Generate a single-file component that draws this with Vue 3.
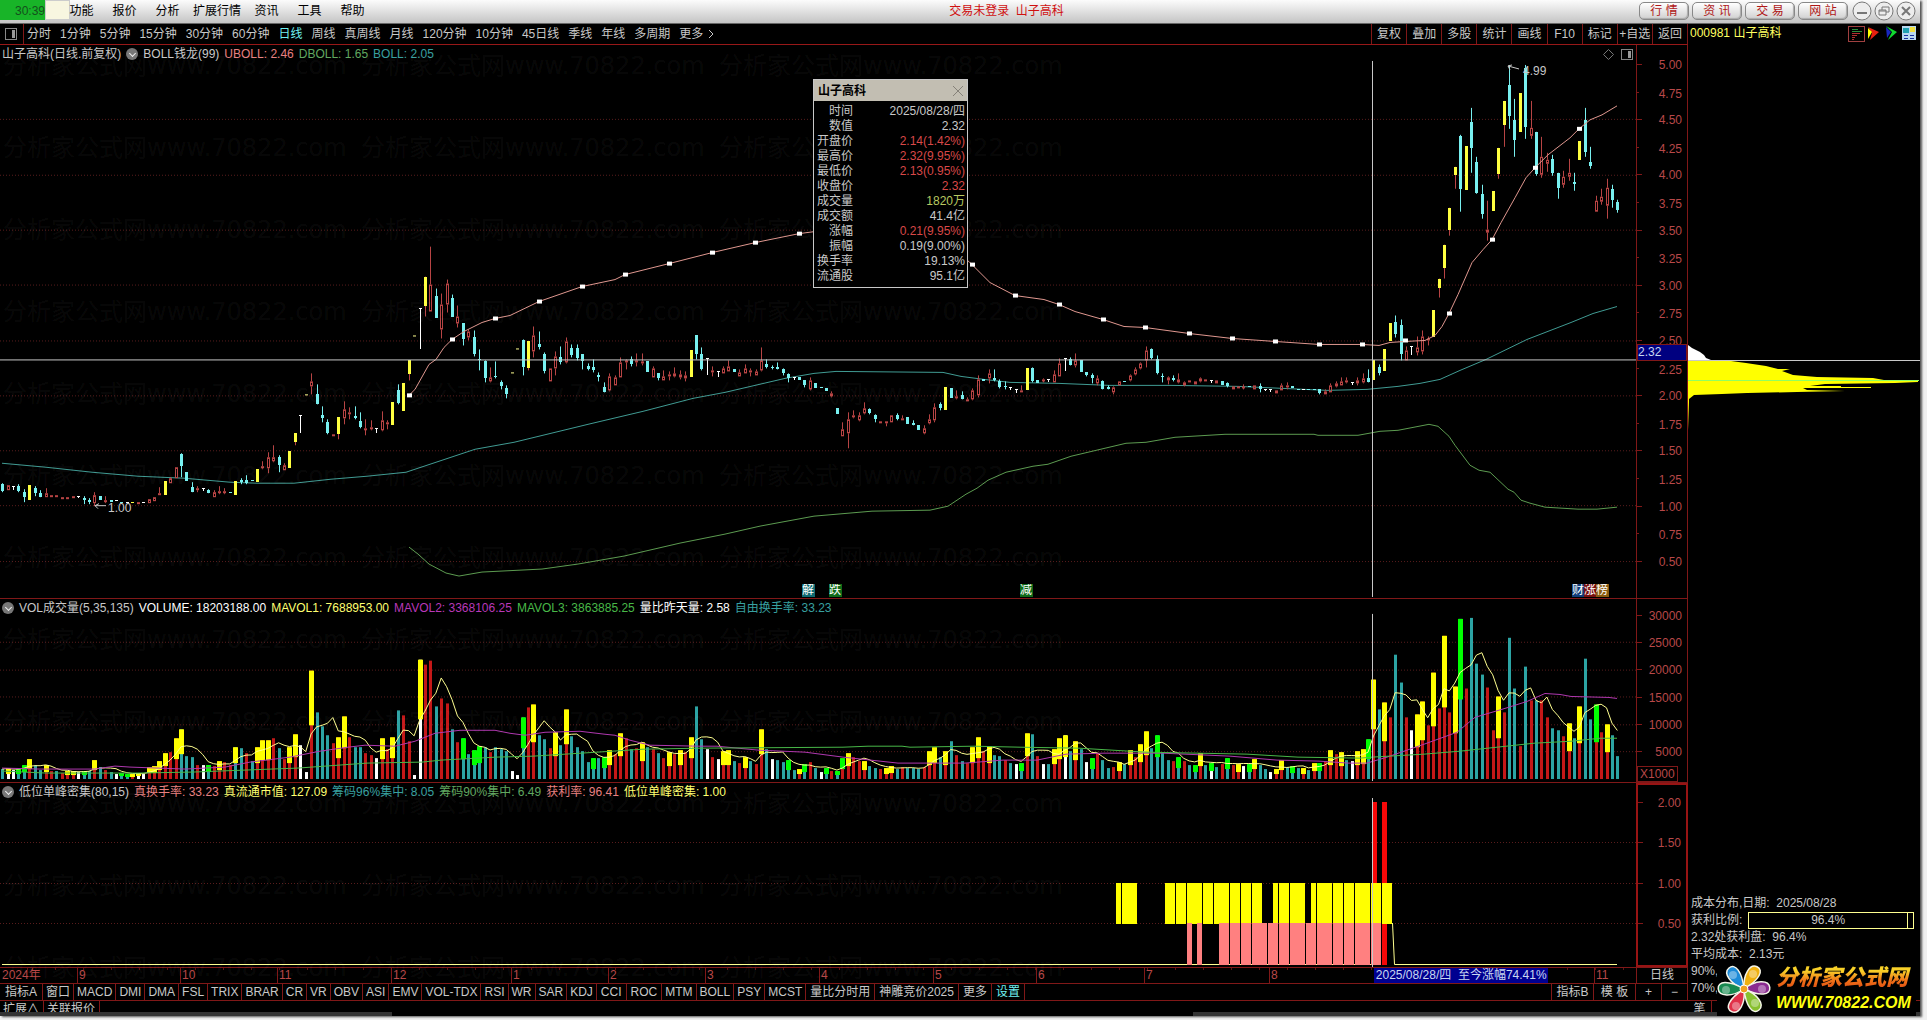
<script setup>
const menus = ['功能', '报价', '分析', '扩展行情', '资讯', '工具', '帮助']
const quick = ['行 情', '资 讯', '交 易', '网 站']
const periods = ['分时', '1分钟', '5分钟', '15分钟', '30分钟', '60分钟', '日线', '周线', '真周线', '月线', '120分钟', '10分钟', '45日线', '季线', '年线', '多周期', '更多']
const tools = ['复权', '叠加', '多股', '统计', '画线', 'F10', '标记', '+自选', '返回']
const tabs = ['指标A', '窗口', 'MACD', 'DMI', 'DMA', 'FSL', 'TRIX', 'BRAR', 'CR', 'VR', 'OBV', 'ASI', 'EMV', 'VOL-TDX', 'RSI', 'WR', 'SAR', 'KDJ', 'CCI', 'ROC', 'MTM', 'BOLL', 'PSY', 'MCST', '量比分时用', '神雕竞价2025', '更多', '设置']
const roomy = ['指标A', 'CCI', 'ROC', '量比分时用', '神雕竞价2025', '更多', '设置']
const details = [
  ['时间', '2025/08/28/四', ''], ['数值', '2.32', ''], ['开盘价', '2.14(1.42%)', 'rise'], ['最高价', '2.32(9.95%)', 'rise'],
  ['最低价', '2.13(0.95%)', 'rise'], ['收盘价', '2.32', 'rise'], ['成交量', '1820万', 'vol'], ['成交额', '41.4亿', ''],
  ['涨幅', '0.21(9.95%)', 'rise'], ['振幅', '0.19(9.00%)', ''], ['换手率', '19.13%', ''], ['流通股', '95.1亿', ''],
]
const months = [['2024年', 1], ['9', 77], ['10', 180], ['11', 277], ['12', 391], ['1', 511], ['2', 608], ['3', 705], ['4', 819], ['5', 933], ['6', 1036], ['7', 1144], ['8', 1269], ['11', 1594]]
const pins = [['解', 802, '#0e6a72'], ['跌', 829, '#106a18'], ['减', 1020, '#106a18'], ['财', 1572, '#103c78'], ['涨', 1584, '#781010'], ['榜', 1596, '#8a5a10']]

const W = 1636
const barX = i => 2.2 + 5.42 * i
const pct = (v, total) => (v / total) * 100 + '%'

// one token per trading day: kind, body top, body bottom, wick top, wick bottom
const days = (
  'c485,492,484,493 r486,491 w487,491 c487,492,485,493 c493,498,490,503 y486,501 c489,494,487,497 c494,498,491,498 r494,498,489,498 r496,498 ' +
  'r496,498 r498,499 r498,499 r497,499 w497,499 c499,501,497,505 c501,503,499,505 r496,504,493,507 c497,501 r501,503,497,504 ' +
  'c501,503 w501,502 c503,504 w503,504 y503,504 r503,504 w503,504 r500,504 r498,502 r494,495,488,495 ' +
  'y482,496 r479,484,478,484 r468,479 c455,467,454,478 c473,482 c488,493,483,493 r489,491,487,493 w489,492 c491,494,490,494 r493,498,491,498 ' +
  'r492,494,487,495 r492,494,489,495 c493,494 y482,496 c481,483,479,485 c481,484,476,485 c481,482 y470,483 r467,469,462,470 r458,469,453,474 ' +
  'r458,462,446,463 c458,466,456,473 r466,471,464,471 y452,469 y434,443,434,446 w416,434 t395,396 r382,387,374,395 c395,405,385,405 c416,419,407,423 ' +
  'c423,434,420,435 r435,437 y418,435,418,440 r410,419,402,425 r413,415,408,420 c417,419,407,420 c422,428,413,429 r429,430,420,436 r428,430,421,431 w429,434 ' +
  'r421,431,412,432 r423,425,421,430 y403,426 c391,404,385,405 y384,412 y361,375,361,381 t336,337 w308,350 y277,306,277,317 r285,312,247,312 ' +
  'c296,318,289,318 r305,330,294,339 r284,305,280,313 c298,317,295,317 r317,324,306,328 c324,340,324,346 r332,338,330,341 c338,355,331,357 c360,361,350,371 c362,379,361,383 ' +
  'r378,382,368,383 c377,378,362,379 c383,387,381,390 c389,395,386,399 t373,374 t349,350 c341,368,340,376 y342,369,342,371 r336,352,327,358 c345,348,332,350 ' +
  'c355,372,353,374 r369,382 r357,369,352,376 c358,363,347,365 r342,363,338,364 c349,356,345,358 c349,359,345,361 c355,362,355,370 c367,370,364,371 c368,371,360,373 ' +
  'c376,378,373,382 c388,393,383,393 r377,391,374,392 r378,386,376,386 r363,378,358,378 r361,363,360,370 c360,365,357,367 r361,363,354,367 r362,364,354,366 c362,373 ' +
  'r369,378,367,378 c374,379,374,381 r377,381,371,381 r375,377,372,381 r374,377,368,378 r375,378,371,380 r376,379,372,382 y351,378 c336,355,336,360 c355,370,348,371 ' +
  'w359,376 r371,373,367,377 w372,378 r369,374,367,374 r367,372,361,372 c370,373 r373,377,370,377 r369,374,365,374 r371,373,369,377 r372,376,370,376 ' +
  'r361,371,348,372 c365,368,360,369 c368,369,366,370 c368,370,363,370 c370,374,369,376 c375,379,374,383 w378,381 c378,381 c381,386,381,388 r381,390,378,391 ' +
  'c384,389 c388,389 c389,392 r394,397,392,398 c409,415 r430,437,423,437 r420,434,413,449 r416,418,411,419 r416,421,413,422 r409,414,403,415 ' +
  'c410,414,409,415 c416,420,415,423 r422,424 r422,424,422,427 r416,423 c416,420,414,421 r419,421,416,421 c418,425 c424,426,421,426 c426,431 ' +
  'r429,434,426,435 r420,424,415,425 r408,421,404,423 c405,409,403,411 y388,411 c389,399 r397,399,391,400 c396,400,392,400 r400,402,398,402 r391,400,389,401 ' +
  'r380,396,376,398 c380,382 r374,379,370,384 c379,381,370,382 c382,388,380,389 c387,388,382,390 w388,391 w390,394 r391,393,386,393 y369,391 ' +
  'c369,382,368,383 c381,384 r380,381,379,383 w380,383 r375,383,371,383 r364,377,359,377 w359,372 c360,366,358,366 r361,366,354,368 c361,373 ' +
  'c373,376,373,377 c376,379,374,384 r379,384,376,386 c382,390,381,390 c388,390,386,390 r388,393,387,395 r382,386 c382,383 r376,381,375,382 r370,375,368,376 ' +
  'r364,369,363,370 r351,361,347,368 c350,359,349,360 c360,374,356,375 c377,378,374,383 r378,381,377,385 c379,381,376,382 r380,383,374,384 r383,386,382,387 r381,382 ' +
  'r382,385 r379,382,378,383 r380,381 w381,384 r381,384 c382,386 c384,387,383,388 r387,390 r387,388 r387,388,385,390 ' +
  'c387,388 r386,390 c387,390,384,393 w390,392 w390,393 r391,394 r386,391,384,391 r386,388,383,390 c387,389 c390,391 ' +
  'w390,391 c390,391 c390,391 c390,394,390,395 r392,395,390,395 r386,393,384,393 r384,387,382,388 r382,386,378,386 r381,383,378,384 w383,386 ' +
  'r381,384,378,386 r379,383,374,384 c379,383,370,383 y361,381 c368,374,365,376 y350,372 y324,342 c323,335,316,338 c326,355,320,361 r351,361,347,361 ' +
  'w347,356 r348,353,337,356 r337,352,331,355 r339,341,337,346 y310,338 y279,288,279,298 y245,268,245,279 y208,230,208,236 y167,175,167,189 c136,189,135,212 ' +
  'y146,190 c122,148,108,173 c162,193,157,194 c194,214,185,219 r230,233,201,241 y191,211 y148,174,148,179 y101,125,101,147 c85,116,65,129 c120,140,99,157 ' +
  'y93,132 c68,127,65,139 r128,136,101,139 c132,174,132,176 r157,175,137,178 r160,164,153,172 c159,173,155,176 c173,188,173,199 r177,185,171,188 r173,177,159,181 ' +
  'c182,184,173,191 y141,160 c120,152,108,157 c162,166,147,169 r201,212,196,212 r197,202,189,205 r188,206,179,219 c189,200,185,208 c202,210,200,213'
).split(' ').map((t, i) => {
  const [a, b, hi = a, lo = b] = t.slice(1).split(',').map(Number)
  return { k: t[0], a, b, hi, lo, x: Math.round(barX(i)) }
})

// bar colour, optional highlight of the upper half, height
const volumes = (
  'c10 wy11 w9 cg10 cg14 ry20 c14 c9 ry14 r8 c8 r6 ry8 ry8 w7 cg8 c8 ry19 c12 r9 c7 w5 cg6 cg5 ry5 wy6 w5 ry12 ry13 ry18 ry26 r27 ry41 cy50 c23 c22 r14 w14 cg14 r13 ' +
  'ry18 r17 r14 cy32 c31 r26 c18 ry32 ry39 ry39 r41 c31 r20 ry32 ry45 w34 w7 ry109 c67 c53 c44 r36 ry42 ry63 r42 c32 c32 r26 r24 w21 ry41 r30 ry42 c69 r64 r38 w4 wy120 r115 r119 ' +
  'c73 r81 r76 c50 r37 cg41 c25 cg29 cg33 c32 r27 c32 c30 c28 w8 w4 cg62 r72 ry75 c44 c40 r31 ry47 c34 ry70 c43 c32 c28 c17 cg21 c21 cg22 ry29 r25 ry46 r41 c30 r31 ry37 c32 ' +
  'r30 c26 r21 ry27 r25 ry29 r27 ry42 c73 c40 w30 r22 w20 ry28 ry29 c18 r16 ry22 c18 r15 ry50 c30 w20 c19 c17 cg19 c9 ry10 cg15 r17 c11 w7 cg11 r8 cg8 rg21 ry26 r22 r18 ry18 ' +
  'c13 c11 r10 ry11 ry13 c10 r12 c11 c11 c10 r12 ry28 ry32 c22 ry28 c38 r24 c18 r16 ry32 ry42 r28 ry33 c24 c23 r19 c16 w15 cg16 ry46 c45 r23 w15 c15 ry30 ry41 wy44 c28 ry38 c30 ' +
  'w17 cg21 r26 c19 c11 r12 ry17 c15 ry29 r22 ry35 ry48 c31 cg44 c27 c19 r18 cg22 r18 c14 cg14 ry26 c14 wg16 c12 r15 cg21 r14 ry15 w13 cg15 ry20 c14 c10 w7 ry10 ry19 c12 cg13 c11 ' +
  'ry11 c9 ry16 cg16 r18 ry29 r25 ry27 c19 w18 ry28 ry30 cg40 ry100 c70 ry77 r62 c125 c97 r62 w49 ry65 ry78 r54 ry107 r71 ry144 r67 ry93 cg161 r91 c162 c116 c105 r92 r49 ry83 r67 c142 c91 ' +
  'r33 c113 r79 c79 r79 r62 c51 c49 r43 ry56 c41 ry73 c121 c60 rg75 r47 ry55 c44 c23'
).split(' ').map((t, i) => {
  const m = t.match(/^([rcw])([yg]?)(\d+)$/)
  return { k: m[1], mark: m[2], h: +m[3], x: Math.round(barX(i)) }
})
const mavol1 = volumes.map((v, i) => {
  const part = volumes.slice(Math.max(0, i - 4), i + 1)
  return barX(i) + ',' + (780 - part.reduce((s, p) => s + p.h, 0) / part.length)
}).join(' ')
const mavol2 = '2,769 40,770 95,770 115,767 130,768 185,770 225,768 250,763 290,758 320,752 348,748 365,746 395,747 415,742 435,734 460,731 495,731 510,734 525,736 545,733 580,732 605,735 615,736 630,741 650,746 700,747 717,747 759,751 805,753 843,758 898,764 965,764 1003,761 1037,761 1066,755 1104,754 1163,754 1230,757 1277,761 1319,762 1348,764 1367,764 1387,758 1424,745 1457,733 1475,718 1505,709 1527,702 1545,694 1560,695 1571,697 1609,698 1617,699'
const mavol3 = '2,772 46,774 138,774 193,773 298,769 367,764 422,763 441,761 496,758 533,757 597,753 643,750 700,749 843,748 868,747 902,747 910,748 974,747 1020,748 1079,749 1146,753 1247,755 1298,758 1360,759 1372,758 1424,755 1460,752 1497,748 1534,744 1571,742 1600,739 1617,739'

const upper = '409,396 415,390 429,365 436,360 444,348 452,340 464,332 482,323 495,319 510,316 539,302 582,287 615,280 625,275 669,264 712,253 755,243 799,234 814,232 850,229 900,232 940,245 969,262 972,265 990,283 1015,296 1044,300 1059,305 1075,312 1103,320 1124,327 1145,328 1189,334 1232,339 1275,342 1319,345 1362,345 1379,346 1390,343 1405,342 1425,341 1435,336 1442,327 1449,314 1458,295 1472,263 1483,250 1492,240 1501,223 1515,198 1526,178 1535,168 1548,155 1570,138 1579,129 1590,120 1602,115 1617,106'
const middle = '2,464 46,468 92,473 138,477 184,479 230,483 257,484 294,484 331,480 367,477 406,473 445,460 475,450 514,443 588,425 643,412 693,399 725,393 785,379 814,374 836,372 943,373 961,377 984,380 1010,383 1059,384 1109,386 1171,386 1238,387 1305,390 1327,391 1367,390 1398,387 1420,384 1440,380 1460,371 1486,360 1527,340 1571,323 1593,314 1617,307'
const lower = '409,548 418,555 429,565 446,574 459,577 482,573 542,570 578,565 624,557 680,544 725,535 760,527 814,517 872,512 930,511 948,507 966,495 977,489 988,481 1006,473 1033,467 1048,465 1071,457 1126,444 1146,443 1175,438 1225,435 1314,435 1318,436 1358,436 1380,432 1398,431 1429,425 1438,427 1449,437 1455,446 1470,466 1479,471 1490,473 1508,490 1514,493 1521,501 1530,504 1545,508 1578,510 1597,510 1617,508'
const knots = '409,396 452,340 495,319 539,302 582,287 625,275 669,264 712,253 755,243 799,234 972,265 1015,296 1059,305 1103,320 1145,328 1189,334 1232,339 1275,342 1319,345 1362,345 1405,341 1449,314 1492,240 1535,168 1579,129'.split(' ').map(p => p.split(',').map(Number))

const priceAxis = Array.from({ length: 19 }, (_, n) => {
  const minor = n % 2 === 1
  return { v: (5 - n * 0.25).toFixed(2), y: 64 + 27.65 * n, minor }
})
const volAxis = [30000, 25000, 20000, 15000, 10000, 5000].map((v, n) => ({ v: String(v), y: 615 + 27.4 * n }))
const lowAxis = ['2.00', '1.50', '1.00', '0.50'].map((v, n) => ({ v, y: 802 + 40.4 * n }))

const gold = [[1116, 1121], [1122, 1137], [1165, 1175], [1176, 1186], [1187, 1202], [1203, 1213], [1214, 1229], [1230, 1240], [1241, 1251], [1252, 1262], [1273, 1278], [1279, 1289], [1290, 1305], [1311, 1316], [1317, 1332], [1333, 1343], [1344, 1354], [1355, 1370], [1371, 1381], [1382, 1392]]
const pink = [[1187, 1192], [1197, 1202], [1219, 1229], [1230, 1240], [1241, 1251], [1252, 1267], [1268, 1278], [1279, 1289], [1290, 1305], [1306, 1316], [1317, 1332], [1333, 1343], [1344, 1354], [1355, 1370], [1371, 1381]]
const marks = Array.from({ length: 36 }, (_, n) => n)
</script>

<template>
  <div class="page">
    <div class="window">
      <header class="titlebar">
        <span class="clock">30:39</span><span class="cream"></span>
        <nav class="menus"><button v-for="m in menus" :key="m">{{ m }}</button></nav>
        <h1>交易未登录&nbsp; 山子高科</h1>
        <div class="quick"><button v-for="q in quick" :key="q">{{ q }}</button></div>
        <div class="winbtns">
          <button aria-label="最小化"><svg width="20" height="20" viewBox="0 0 20 20"><circle cx="10" cy="10" r="9" /><path d="M5 12h10" /></svg></button>
          <button aria-label="还原"><svg width="20" height="20" viewBox="0 0 20 20"><circle cx="10" cy="10" r="9" /><path class="thin" d="M8 9V6h7v5h-3M5 9h7v5H5zM5 10h7" /></svg></button>
          <button aria-label="关闭"><svg width="20" height="20" viewBox="0 0 20 20"><circle cx="10" cy="10" r="9" /><path d="M6 6l8 8M14 6l-8 8" /></svg></button>
        </div>
      </header>

      <div class="body">
        <div class="left">
          <div class="toolbar">
            <button class="dock" aria-label="侧栏"><svg width="13" height="12" viewBox="0 0 13 12"><rect x=".5" y=".5" width="11" height="11" fill="none" stroke="#888" /><rect x="7" y="2" width="3" height="8" fill="#999" /></svg></button>
            <div class="periods"><button v-for="p in periods" :key="p" :class="{ on: p === '日线' }">{{ p }}</button><svg class="chev" width="6" height="10" viewBox="0 0 6 10"><path d="M1 1l4 4-4 4" fill="none" stroke="#c8c8c8" /></svg></div>
            <div class="tools"><button v-for="t in tools" :key="t">{{ t }}</button></div>
          </div>

          <div class="charts">
            <section class="pane">
              <svg class="plot" viewBox="0 45 1636 554" preserveAspectRatio="none">
                <path v-for="n in 9" :key="n" class="dots" :d="`M0 ${Math.round(64 + 55.3 * n) + 0.5}H1636`" />
                <polyline class="mid" :points="middle" />
                <polyline class="low" :points="lower" />
                <g v-for="(d, i) in days" :key="i" :class="'k' + d.k">
                  <template v-if="d.k === 'r'">
                    <path v-if="d.hi < d.a" :d="`M${d.x + 0.5} ${d.hi}V${d.a}`" />
                    <path v-if="d.lo > d.b" :d="`M${d.x + 0.5} ${d.b}V${d.lo}`" />
                    <rect :x="d.x - 0.5" :y="d.a + 0.5" width="2" :height="Math.max(1, d.b - d.a - 1)" />
                  </template>
                  <template v-else-if="d.k === 't'"><rect :x="d.x - 1" :y="d.a" width="3" height="1" /></template>
                  <template v-else-if="d.k === 'w'">
                    <rect :x="d.x" :y="d.a" width="1" :height="d.b - d.a" /><rect :x="d.x - 1" :y="d.a" width="3" height="1" />
                  </template>
                  <template v-else>
                    <path v-if="d.hi < d.a || d.lo > d.b" :class="{ tail: d.k === 'y' }" :d="`M${d.x + 0.5} ${d.hi}V${d.lo}`" />
                    <rect :x="d.x - 1" :y="d.a" width="3" :height="d.b - d.a" />
                  </template>
                </g>
                <polyline class="top" :points="upper" />
                <rect v-for="k in knots" :key="k[0]" :x="k[0] - 2" :y="k[1] - 2" width="5" height="4" fill="#fff" />
                <path class="hair" d="M0 360.5H1636M1372.5 61V598" />
                <path class="note" d="M95 506.5h11M95 506.5l4 -2M95 506.5l3 3M1508 66l11 3M1508 66l4 -1M1508 66l2 4" />
                <text x="108" y="513">1.00</text><text x="1523" y="75">4.99</text>
                <path d="M1608.500 49.500l5 5-5 5-5-5z" fill="none" stroke="#777" />
                <rect x="1621.500" y="49.500" width="11" height="10" fill="none" stroke="#888" /><rect x="1628" y="51" width="3" height="7" fill="#999" />
              </svg>
              <div class="legend">
                <span>山子高科(日线.前复权)</span><i class="fold"></i><span>BOLL钱龙(99)</span>
                <span class="salmon">UBOLL: 2.46</span><span class="green">DBOLL: 1.65</span><span class="teal">BOLL: 2.05</span>
              </div>
              <span v-for="p in pins" :key="p[0]" class="pin" :style="{ left: pct(p[1], W), background: p[2] }">{{ p[0] }}</span>
            </section>
            <aside class="axis">
              <i v-for="a in priceAxis" :key="a.v" class="tick" :class="{ minor: a.minor }" :style="{ top: pct(a.y - 45, 554) }"></i>
              <span v-for="a in priceAxis" :key="'l' + a.v" class="lab" :style="{ top: pct(a.y - 44 + (a.minor ? 1 : 0), 554) }">{{ a.v }}</span>
              <b class="now">2.32</b>
            </aside>

            <section class="pane">
              <svg class="plot" viewBox="0 599 1636 184" preserveAspectRatio="none">
                <path v-for="n in 5" :key="n" class="dots" :d="`M0 ${Math.round(615 + 27.4 * n) + 0.5}H1636`" />
                <g v-for="(v, i) in volumes" :key="i">
                  <rect :class="'v' + v.k" :x="v.x - 1" :y="780 - v.h" width="3" :height="v.h" />
                  <rect v-if="v.mark" :class="'m' + v.mark" :x="v.x - 2" :y="780 - v.h" width="5" :height="Math.round(v.h / 2)" />
                </g>
                <polyline :points="mavol1" stroke="#ffff90" /><polyline :points="mavol2" stroke="#b038b0" /><polyline :points="mavol3" stroke="#48b848" />
                <path class="hair" d="M1372.500 614V782" />
              </svg>
              <div class="legend">
                <i class="fold"></i><span>VOL成交量(5,35,135)</span><span class="white">VOLUME: 18203188.00</span><span class="yellow">MAVOL1: 7688953.00</span>
                <span class="purple">MAVOL2: 3368106.25</span><span class="lime">MAVOL3: 3863885.25</span><span class="white">量比昨天量: 2.58</span><span class="teal">自由换手率: 33.23</span>
              </div>
            </section>
            <aside class="axis">
              <i v-for="a in volAxis" :key="a.v" class="tick" :style="{ top: pct(a.y - 599, 184) }"></i>
              <span v-for="a in volAxis" :key="'l' + a.v" class="lab" :style="{ top: pct(a.y - 598, 184) }">{{ a.v }}</span>
              <b class="unit">X1000</b>
            </aside>

            <section class="pane last">
              <svg class="plot" viewBox="0 783 1636 184" preserveAspectRatio="none">
                <path v-for="n in 3" :key="n" class="dots" :d="`M0 ${Math.round(802 + 40.4 * n) + 0.5}H1636`" />
                <rect x="2" y="964" width="1370" height="1" fill="#ffff90" /><path d="M1392.500 923L1394.500 964.500H1617" fill="none" stroke="#ffff90" />
                <rect v-for="g in gold" :key="'g' + g[0]" :x="g[0]" y="883" :width="g[1] - g[0]" height="41" fill="#ff0" />
                <rect v-for="g in pink" :key="'p' + g[0]" :x="g[0]" y="923" :width="g[1] - g[0]" height="42" fill="#ff8080" />
                <path d="M1373 802h4v81h-4zM1382 802h5v81h-5zM1382 924h5v41h-5z" fill="#f80808" />
                <path class="hair" d="M1372.500 798V967" />
              </svg>
              <div class="legend">
                <i class="fold"></i><span>低位单峰密集(80,15)</span><span class="salmon">真换手率: 33.23</span><span class="yellow">真流通市值: 127.09</span>
                <span class="teal">筹码96%集中: 8.05</span><span class="green">筹码90%集中: 6.49</span><span class="salmon">获利率: 96.41</span><span class="yellow">低位单峰密集: 1.00</span>
              </div>
            </section>
            <aside class="axis active">
              <i v-for="a in lowAxis" :key="a.v" class="tick" :style="{ top: pct(a.y - 785, 180) }"></i>
              <span v-for="a in lowAxis" :key="'l' + a.v" class="lab" :style="{ top: pct(a.y - 784, 180) }">{{ a.v }}</span>
            </aside>

            <div class="watermark" aria-hidden="true"><span v-for="n in marks" :key="n">分析家公式网www.70822.com</span></div>

            <div class="card">
              <div class="cardhead"><strong>山子高科</strong><button aria-label="关闭"><svg width="12" height="12" viewBox="0 0 12 12"><path d="M1 1l10 10M11 1L1 11" stroke="#858178" /></svg></button></div>
              <dl><div v-for="d in details" :key="d[0]"><dt>{{ d[0] }}</dt><dd :class="d[2]">{{ d[1] }}</dd></div></dl>
            </div>
          </div>

          <div class="timeline">
            <div class="months">
              <span v-for="m in months" :key="m[1]" :style="{ left: pct(m[1], W) }">{{ m[0] }}</span>
              <b class="cursor">2025/08/28/四&nbsp; 至今涨幅74.41%</b>
            </div>
            <button>日线</button>
          </div>
          <div class="tabs">
            <button v-for="t in tabs" :key="t" :class="{ on: t === '设置', roomy: roomy.includes(t) }">{{ t }}</button>
            <div class="tabsend"><button>指标B</button><button>模 板</button><button class="half">+</button><button class="half">−</button></div>
          </div>
          <div class="extra"><button>扩展∧</button><button>关联报价</button></div>
        </div>

        <div class="side">
          <div class="sidehead">
            <span>000981 山子高科</span>
            <svg width="72" height="18" viewBox="0 0 72 18">
              <rect x=".5" y="2.500" width="16" height="15" fill="none" stroke="#a04040" />
              <path d="M4 5.500h6M4 7.500h10" stroke="#2a8a3a" /><path d="M4 9.500h8M4 11.500h5M4 13.500h3M4 15.500h2" stroke="#b03030" />
              <path d="M20 3l11 5-9 8 2-7z" fill="#e82010" /><path d="M20 4l4 4-4 7z" fill="#ff0" />
              <path d="M38 2l11 6-9 8 4-8z" fill="#10d830" /><path d="M38 3l5 5-4 6z" fill="#1828c0" />
              <rect x="54" y="2" width="14" height="14" fill="#b8d8f0" /><path d="M55 4h6v5h-6z" fill="#20a0b0" /><path d="M62 3h5v5h-5z" fill="#f0e040" /><path d="M56 11.500h4M56 14.500h4M62 11.500h4M62 14.500h4" stroke="#1830a0" />
            </svg>
          </div>
          <svg class="chips" viewBox="0 45 232 850" preserveAspectRatio="none">
            <path d="M0 345l4 3 8 4 4 3 2 3 5 2H0z" fill="#fff" />
            <path d="M0 361h43l15 2 20 3 12 3h12l-8 2 11 4 24 2 56 1 11 2 34 1v1l-23 1-70 1-15 2h31v1h30v1h-68l4 2 38 1-48 1-50 1-25 1-28 1-5 4v3l-1 28H0z" fill="#ff0" />
            <path d="M0 380.500h231" stroke="#90ff60" /><path d="M0 360.500h232" stroke="#c8c8c8" />
          </svg>
          <div class="stats">
            <p>成本分布,日期:&nbsp; 2025/08/28</p>
            <p class="ratio">获利比例: <span class="meter"><span>96.4%</span><i></i></span></p>
            <p>2.32处获利盘:&nbsp; 96.4%</p>
            <p>平均成本:&nbsp; 2.13元</p>
            <p>90%,</p>
            <p>70%,</p>
          </div>
          <div class="sidetabs"><button>笔</button></div>
          <div class="logo">
            <svg width="54" height="52" viewBox="-27 -26 54 52">
              <g stroke="#f4f4e8" stroke-width="1.500">
                <path d="M0 0C-14-5-21-16-15-21S-2-18 0 0z" fill="#1c8ad8" />
                <path d="M0 0C-14-5-21-16-15-21S-2-18 0 0z" fill="#f0b010" transform="rotate(66)" />
                <path d="M0 0C-14-5-21-16-15-21S-2-18 0 0z" fill="#8a2a90" transform="rotate(122)" />
                <path d="M0 0C-14-5-21-16-15-21S-2-18 0 0z" fill="#88c030" transform="rotate(180)" />
                <path d="M0 0C-14-5-21-16-15-21S-2-18 0 0z" fill="#e03048" transform="rotate(244)" />
                <path d="M0 0C-14-5-21-16-15-21S-2-18 0 0z" fill="#188a50" transform="rotate(306)" />
              </g>
              <g fill="#fff" opacity=".35"><circle cx="-11" cy="-14" r="4" /><circle cx="9" cy="-15" r="4" /><circle cx="18" cy="0" r="4" /><circle cx="-18" cy="1" r="4" /><circle cx="-8" cy="17" r="4" /><circle cx="11" cy="14" r="4" /></g>
              <circle r="4" fill="#f0a020" stroke="#fff" />
            </svg>
            <div><strong>分析家公式网</strong><a href="#">WWW.70822.COM</a></div>
          </div>
        </div>
      </div>
      <div class="taskedge"><i></i><i></i></div>
    </div>
  </div>
</template>

<style>
body { margin: 0; background: #f0f0f0; }
</style>

<style scoped>
* { box-sizing: border-box; }
.page { height: 100vh; min-height: 700px; padding: 0 7px 4px 0; background: #f0f0f0; font: 12px/16px "Liberation Sans", "Noto Sans CJK SC", sans-serif; color: #c8c8c8; }
button { font: inherit; color: inherit; background: none; border: 0; padding: 0; margin: 0; white-space: nowrap; }
svg { display: block; }
.window { height: 100%; display: flex; flex-direction: column; background: #000; box-shadow: 2px 1px 2px #555; }
.titlebar { flex: 0 0 24px; display: flex; align-items: flex-start; background: linear-gradient(#fcfcfc, #c4c4c4); border-bottom: 1px solid #666; color: #000; line-height: 22px; }
.clock { width: 45px; height: 20px; background: #18b428; color: #14501c; text-align: right; overflow: hidden; }
.cream { width: 25px; height: 20px; background: #f8f6e0; border: 1px solid #ccc; }
.menus { display: flex; margin-left: -10px; }
.menus button { min-width: 43px; padding: 0 4px; }
h1 { flex: 1; margin: 0; font: inherit; color: #d01010; text-align: center; }
.quick { display: flex; gap: 3px; padding-top: 2px; }
.quick button { width: 50px; height: 18px; line-height: 14px; border: 1px solid #888; border-radius: 5px; background: linear-gradient(#fff, #d0d0d0); color: #b01818; box-shadow: inset -1px -1px 1px #aaa; }
.winbtns { display: flex; gap: 2px; padding: 1px 4px 0; }
.winbtns svg { fill: #ededed; stroke: #777; stroke-width: 2; }
.winbtns circle { stroke-width: 1; }
.winbtns .thin { stroke-width: 1; }
.body { flex: 1; min-height: 0; display: flex; }
.left { flex: 1; min-width: 0; display: flex; flex-direction: column; }
.toolbar { flex: 0 0 21px; display: flex; border-bottom: 1px solid #981818; border-right: 1px solid #801818; }
.dock { width: 24px; padding-left: 5px; border-right: 1px solid #801818; }
.periods { flex: 1; display: flex; align-items: center; gap: 9px; padding-left: 3px; overflow: hidden; }
.chev { margin-left: -4px; }
.on { color: #70f0f0; }
.tools { width: 316px; display: grid; grid-template-columns: repeat(9, 1fr); }
.tools button { border-left: 1px solid #801818; }
.charts { flex: 1; min-height: 0; position: relative; display: grid; grid-template-columns: minmax(0, 1fr) 52px; grid-template-rows: minmax(0, 554fr) minmax(0, 184fr) minmax(0, 184fr); }
.pane { position: relative; border-bottom: 1px solid #801818; min-width: 0; }
.pane.last { border-bottom: 0; }
.plot { position: absolute; inset: 0; width: 100%; height: 100%; }
.plot polyline { fill: none; stroke-width: 1; }
.plot text { fill: #c8c8c8; font-size: 12px; }
.dots { stroke: #581c1c; stroke-dasharray: 1 2; }
.mid { stroke: #409c94; }
.low { stroke: #5c9c50; }
.top { stroke: #e09890; }
.kr { fill: none; stroke: #b84444; shape-rendering: crispEdges; }
.kc { fill: #78f0f0; stroke: none; shape-rendering: crispEdges; }
.kc path { stroke: #78f0f0; }
.ky { fill: #ffff40; shape-rendering: crispEdges; }
.ky .tail { stroke: #b84444; }
.kw { fill: #fff; shape-rendering: crispEdges; }
.kt { fill: #ffff90; }
.hair { stroke: #c8c8c8; fill: none; }
.note { stroke: #c8c8c8; fill: none; }
.vr { fill: #c41818; }
.vc { fill: #2ca4a4; }
.vw { fill: #fff; }
.my { fill: #ff0; }
.mg { fill: #0f0; }
.legend { position: absolute; left: 2px; top: 1px; display: flex; align-items: center; gap: 5px; white-space: nowrap; }
.fold { width: 12px; height: 12px; border-radius: 50%; background: #777; display: grid; place-items: center; }
.fold::after { content: ""; width: 4px; height: 4px; margin-top: -2px; border: solid #eee; border-width: 0 1px 1px 0; transform: rotate(45deg); }
.salmon { color: #e88080; }
.green { color: #60a860; }
.teal { color: #38a0a0; }
.white { color: #fff; }
.yellow { color: #ffff70; }
.purple { color: #b838b8; }
.lime { color: #48b848; }
.pin { position: absolute; bottom: 1px; width: 13px; height: 13px; line-height: 13px; color: #fff; overflow: hidden; }
.axis { position: relative; border: solid #801818; border-width: 0 1px 1px; color: #b84848; overflow: hidden; }
.axis.active { border: 2px solid #981414; }
.tick { position: absolute; left: 0; width: 5px; height: 1px; background: #801818; }
.tick.minor { width: 2px; }
.lab { position: absolute; right: 5px; margin-top: -8px; }
.now { position: absolute; left: 0; right: 0; top: 54%; height: 17px; font-weight: 400; background: #000080; border: 1px solid #801818; color: #c8d8f0; line-height: 15px; }
.unit { position: absolute; left: 0; bottom: 0; width: 41px; height: 16px; line-height: 14px; padding-left: 2px; border: 1px solid #801818; font-weight: 400; background: #000; }
.watermark { position: absolute; inset: 2px auto -16px 3px; display: grid; grid-template-columns: repeat(3, 358px); grid-auto-rows: 82px; overflow: hidden; font: 24px/38px "DejaVu Sans", "Noto Sans CJK SC", sans-serif; color: rgba(255, 255, 255, .05); white-space: nowrap; pointer-events: none; }
.card { position: absolute; left: 813px; top: 34px; width: 155px; background: #000; border: 1px solid #c8c8c8; }
.cardhead { display: flex; justify-content: space-between; align-items: center; height: 21px; padding: 0 3px 0 4px; background: #c2beb2; color: #000; }
dl { margin: 0; padding: 3px 2px; }
dl div { display: flex; height: 15px; line-height: 15px; }
dt { width: 37px; text-align: right; white-space: nowrap; }
dd { flex: 1; margin: 0; text-align: right; white-space: nowrap; }
.rise { color: #d84848; }
.vol { color: #b8c860; }
.timeline { flex: 0 0 16px; display: flex; border-top: 1px solid #801818; line-height: 15px; }
.months { flex: 1; position: relative; color: #b84848; background: repeating-linear-gradient(90deg, transparent 0 27px, #601414 27px 28px) 0 0 / 100% 2px no-repeat; }
.months span { position: absolute; padding-left: 1px; border-left: 1px solid #801818; }
.months span:first-child { border: 0; }
.cursor { position: absolute; left: 84%; width: 174px; text-align: center; background: #000090; color: #c8d8f0; font-weight: 400; white-space: nowrap; }
.timeline button { width: 52px; border: solid #801818; border-width: 0 1px; line-height: 15px; }
.tabs { flex: 0 0 17px; display: flex; border-top: 1px solid #801818; line-height: 16px; }
.tabs button { padding: 0 3px; border-right: 1px solid #801818; }
.tabs .roomy { padding: 0 4px; }
.tabs .roomy:first-child { padding: 0 5px; }
.tabsend { margin-left: auto; display: flex; border-left: 1px solid #801818; }
.tabsend button { width: 42px; }
.tabsend .half { width: 26px; }
.extra { flex: 0 0 12px; display: flex; overflow: hidden; border-top: 1px solid #801818; }
.extra button { padding: 0 4px 0 3px; height: 16px; border-right: 1px solid #801818; }
.side { flex: 0 0 232px; position: relative; display: flex; flex-direction: column; }
.sidehead { flex: 0 0 21px; display: flex; justify-content: space-between; padding: 0 0 0 2px; color: #ffff60; line-height: 18px; }
.chips { flex: 1; min-height: 0; width: 100%; }
.stats { flex: 0 0 105px; padding-left: 3px; }
.stats p { margin: 0; height: 17px; line-height: 17px; white-space: nowrap; }
.ratio { display: flex; gap: 6px; }
.meter { flex: 1; display: flex; margin-right: 6px; border: 1px solid #ffff90; line-height: 15px; text-align: center; }
.meter span { flex: 1; }
.meter i { width: 6px; border-left: 1px solid #ffff90; }
.sidetabs { flex: 0 0 12px; overflow: hidden; border-top: 1px solid #801818; }
.sidetabs button { width: 24px; height: 16px; border-right: 1px solid #801818; }
.logo { position: absolute; right: 4px; bottom: -4px; z-index: 1; display: flex; align-items: center; width: 199px; height: 54px; background: #000; white-space: nowrap; }
.logo div { margin-left: 5px; font-style: italic; font-weight: 700; }
.logo strong { display: block; font-size: 22px; line-height: 28px; background: linear-gradient(#f8d028 25%, #f07018 60%, #d84010); -webkit-background-clip: text; background-clip: text; color: transparent; }
.logo a { display: block; color: #ffff10; font-size: 16px; line-height: 22px; text-decoration: none; }
.taskedge { flex: 0 0 4px; display: flex; justify-content: space-between; }
.taskedge i { width: 392px; background: #333; }
.taskedge i + i { width: 727px; }
</style>
